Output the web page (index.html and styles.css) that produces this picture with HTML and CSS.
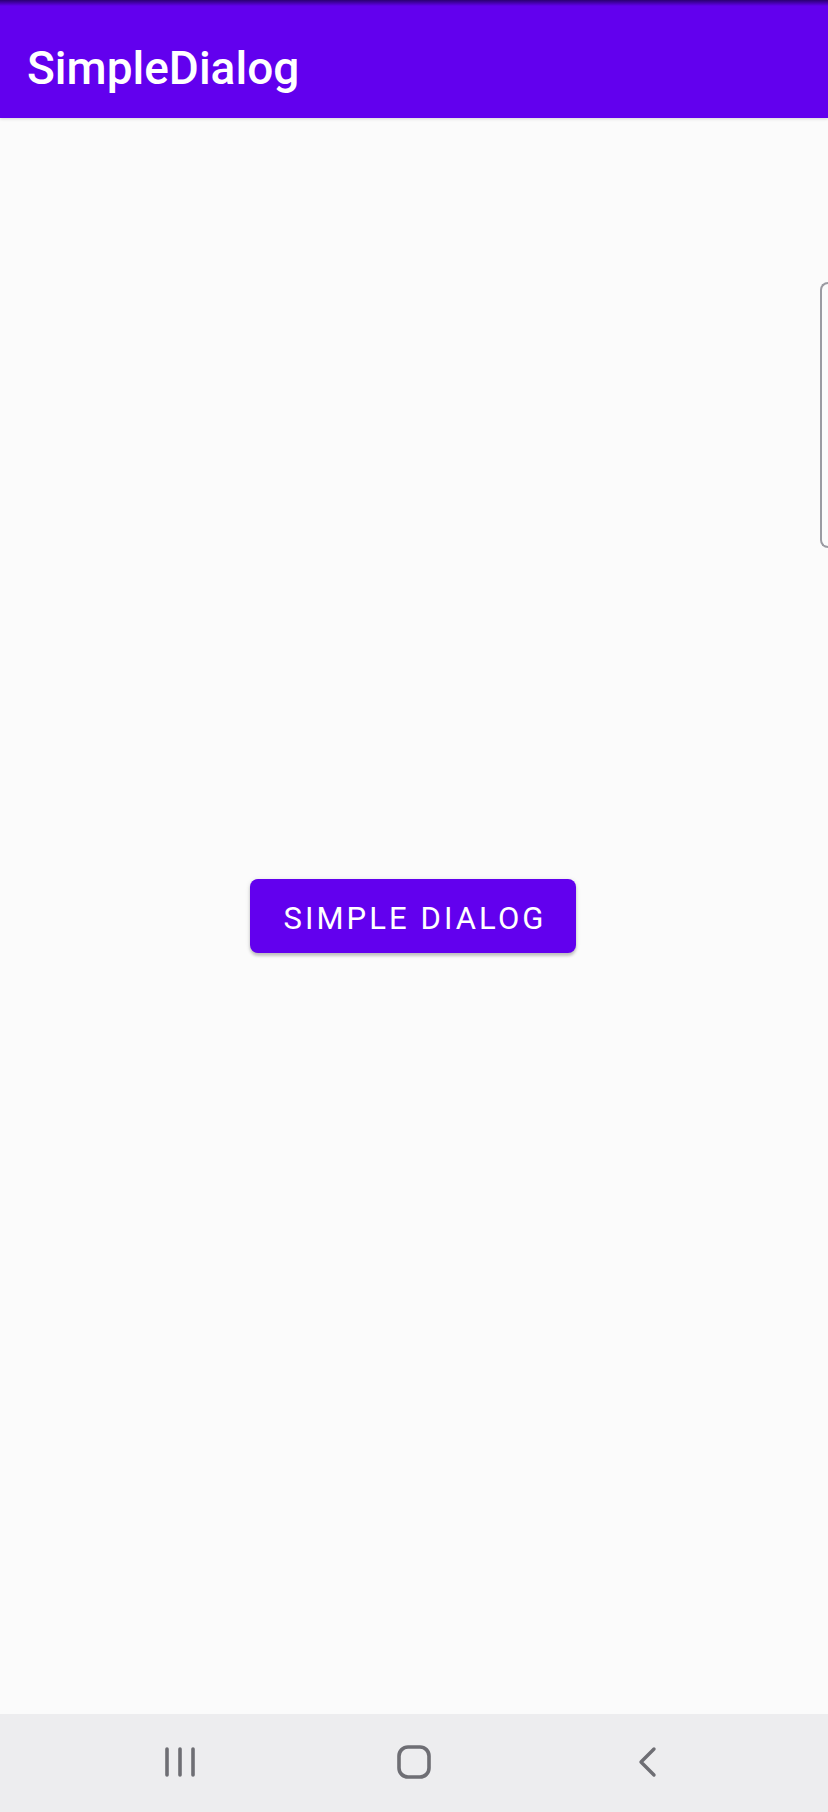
FILE: index.html
```html
<!DOCTYPE html>
<html>
<head>
<meta charset="utf-8">
<link rel="stylesheet" href="styles.css">
</head>
<body>
<div class="screen">
  <header class="appbar">
    <div class="statusedge"></div>
    <h1 class="title">SimpleDialog</h1>
  </header>
  <main class="content">
    <button class="btn">SIMPLE DIALOG</button>
    <div class="edge-handle"></div>
  </main>
  <nav class="navbar">
    <div class="navitem">
      <svg width="32" height="32" viewBox="0 0 32 32"><g stroke="#6e6e74" stroke-width="3.6" stroke-linecap="round"><line x1="3" y1="3" x2="3" y2="29"/><line x1="16" y1="3" x2="16" y2="29"/><line x1="29" y1="3" x2="29" y2="29"/></g></svg>
    </div>
    <div class="navitem">
      <svg width="34" height="34" viewBox="0 0 34 34"><rect x="2" y="2" width="30" height="30" rx="9" fill="none" stroke="#6e6e74" stroke-width="3.6"/></svg>
    </div>
    <div class="navitem">
      <svg width="20" height="32" viewBox="0 0 20 32"><polyline points="16,3 3,16 16,29" fill="none" stroke="#6e6e74" stroke-width="3.4" stroke-linecap="round" stroke-linejoin="round"/></svg>
    </div>
  </nav>
</div>
</body>
</html>
```

FILE: styles.css
```css
html, body {
  margin: 0;
  padding: 0;
  background: #fbfbfb;
}
.screen {
  width: 828px;
  height: 1812px;
  display: flex;
  flex-direction: column;
  font-family: Roboto, "Noto Sans", sans-serif;
  overflow: hidden;
}
.appbar {
  height: 118px;
  background: #6200ee;
  display: flex;
  flex-direction: column;
  box-shadow: 0 1px 3px rgba(0,0,0,0.15);
  position: relative;
  z-index: 1;
}
.statusedge {
  height: 6px;
  background: linear-gradient(#2a0070, #6200ee);
}
.title {
  margin: 0;
  padding: 35px 0 0 27px;
  color: #ffffff;
  font-weight: 500;
  font-size: 46px;
  line-height: 54px;
}
.content {
  flex: 1;
  display: flex;
  align-items: center;
  justify-content: center;
  position: relative;
  background: #fbfbfb;
}
.btn {
  height: 74px;
  width: 326px;
  margin-right: 3px;
  border: none;
  border-radius: 8px;
  background: #6200ee;
  color: #ffffff;
  font-family: Roboto, "Noto Sans", sans-serif;
  font-weight: 400;
  font-size: 31px;
  letter-spacing: 3.1px;
  padding: 4px 0 0 5px;
  box-shadow: 0 3px 3px rgba(0,0,0,0.18), 0 1px 5px rgba(0,0,0,0.12);
}
.edge-handle {
  position: absolute;
  right: 0;
  top: 164px;
  width: 6px;
  height: 262px;
  border: 2px solid #9b9ba2;
  border-right: none;
  border-radius: 8px 0 0 8px;
}
.navbar {
  height: 96px;
  background: #ededef;
  display: flex;
  justify-content: center;
  align-items: center;
  padding-bottom: 2px;
}
.navitem {
  width: 234px;
  display: flex;
  justify-content: center;
  align-items: center;
}
```
